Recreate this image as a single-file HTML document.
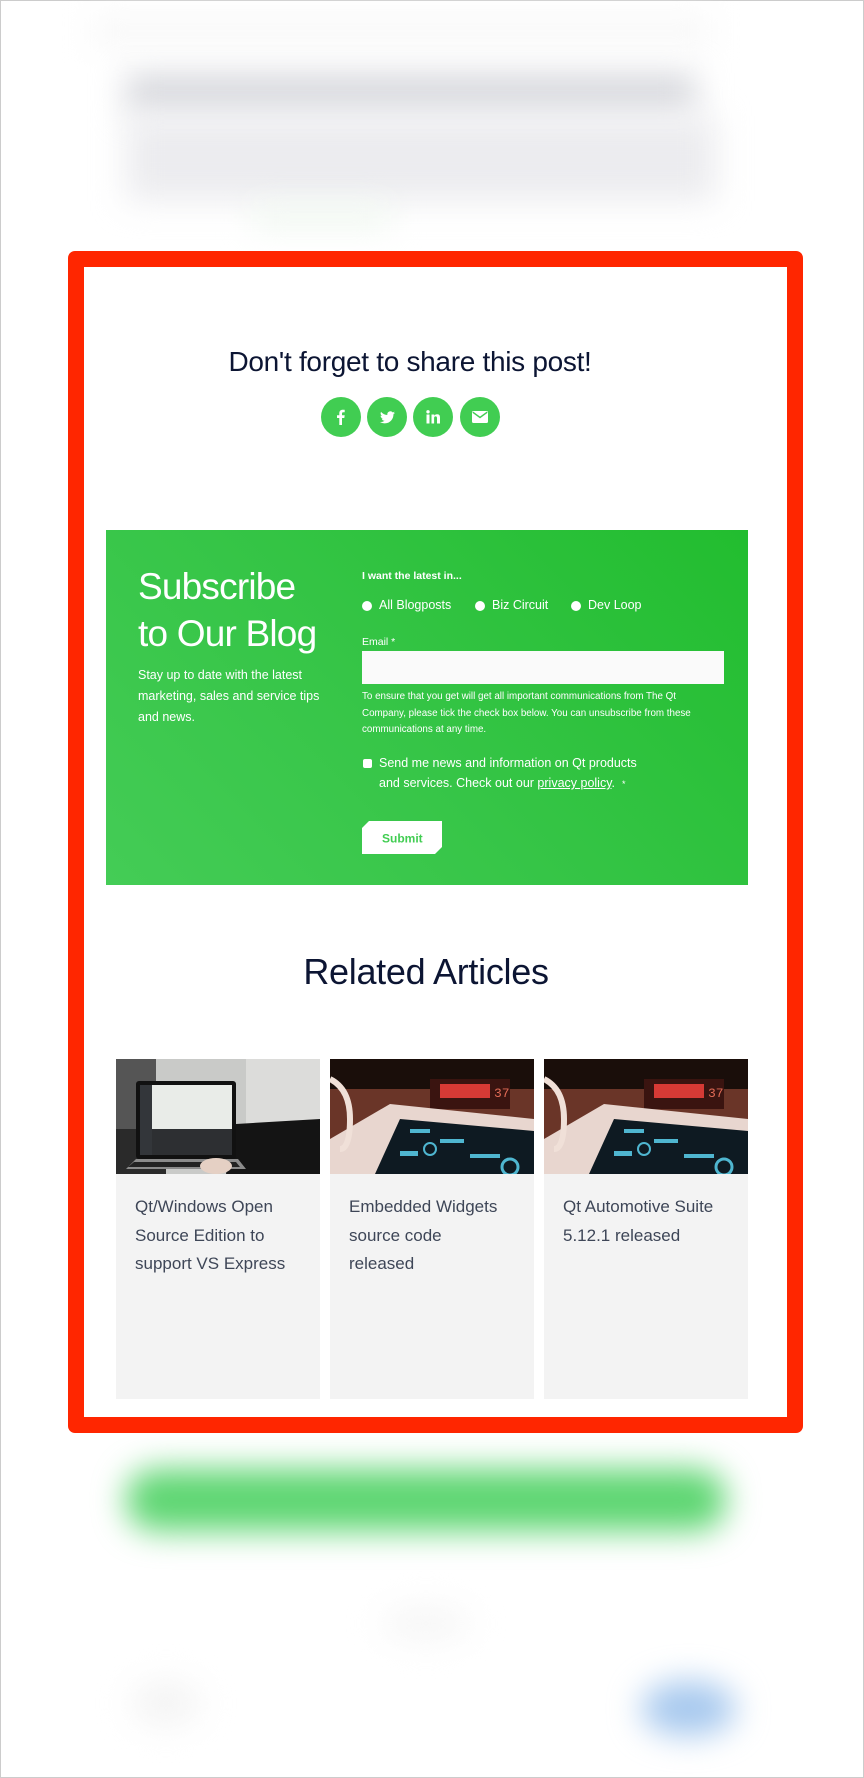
<!DOCTYPE html>
<html><head><meta charset="utf-8"><style>
*{margin:0;padding:0;box-sizing:border-box}
body{width:864px;height:1778px;position:relative;overflow:hidden;background:#fff;font-family:"Liberation Sans",sans-serif;border:1px solid #ccc}
.a{position:absolute}
.blur{position:absolute;filter:blur(16px)}
.frame{left:67px;top:250px;width:735px;height:1182px;border:16px solid #ff2600;border-radius:7px;background:#fff}
.circ{width:40px;height:40px;border-radius:50%;background:#41cd52;top:396px;display:flex;align-items:center;justify-content:center}
.green{left:105px;top:529px;width:642px;height:355px;background:linear-gradient(225deg,#22bd2f 0%,#36c547 55%,#44cc56 100%)}
.w{color:#fff}
.radio{width:10px;height:10px;border-radius:50%;background:#fff;top:600px}
.card{top:1058px;width:204px;height:340px;background:#f3f3f3}
.card .t{position:absolute;left:19px;top:134px;font-size:17px;line-height:28.5px;color:#3e4657;width:160px}
</style></head><body>
<div class="blur" style="left:125px;top:72px;width:570px;height:40px;background:#d8d9de"></div>
<div class="blur" style="left:125px;top:115px;width:590px;height:85px;background:#ececef"></div>
<div class="blur" style="left:250px;top:205px;width:140px;height:22px;background:#f0f8f0"></div>
<div class="blur" style="left:90px;top:15px;width:620px;height:30px;background:#f8f8f8"></div>

<div class="a frame"></div>
<div class="a" style="left:-23px;width:864px;top:345px;text-align:center;font-size:28px;color:#0c1533;letter-spacing:-0.3px">Don't forget to share this post!</div>
<div class="a circ" style="left:320px"><svg width="14" height="16" viewBox="0 0 14 16"><path d="M8 16V9h2.3l.4-2.7H8V4.6c0-.8.2-1.3 1.3-1.3h1.4V.9C10.4.8 9.6.8 8.7.8 6.7.8 5.3 2 5.3 4.3v2H3V9h2.3v7z" fill="#fff"/></svg></div>
<div class="a circ" style="left:366px"><svg width="15" height="13" viewBox="0 0 24 20"><path d="M24 2.4a10 10 0 0 1-2.8.8A4.9 4.9 0 0 0 23.3.5a9.8 9.8 0 0 1-3.1 1.2A4.9 4.9 0 0 0 11.8 6 14 14 0 0 1 1.7.9a4.9 4.9 0 0 0 1.5 6.6 4.9 4.9 0 0 1-2.2-.6 4.9 4.9 0 0 0 3.9 4.8 4.9 4.9 0 0 1-2.2.1 4.9 4.9 0 0 0 4.6 3.4A9.9 9.9 0 0 1 0 17.2 14 14 0 0 0 7.5 19.4c9.1 0 14-7.5 14-14v-.6A10 10 0 0 0 24 2.4z" fill="#fff"/></svg></div>
<div class="a circ" style="left:412px"><svg width="14" height="14" viewBox="0 0 14 14"><rect x="0.5" y="4.5" width="3" height="9" fill="#fff"/><circle cx="2" cy="1.8" r="1.7" fill="#fff"/><path d="M5.5 4.5h2.8v1.3c.5-.9 1.6-1.5 2.9-1.5 2.4 0 2.8 1.6 2.8 3.6v5.6h-3V8.6c0-1.1 0-2.2-1.4-2.2s-1.5 1-1.5 2.1v5H5.5z" fill="#fff"/></svg></div>
<div class="a circ" style="left:459px"><svg width="16" height="12" viewBox="0 0 16 12"><rect x="0" y="0" width="16" height="12" rx="1.5" fill="#fff"/><path d="M0.8 1.2 8 6.5l7.2-5.3" stroke="#41cd52" stroke-width="1.5" fill="none"/></svg></div>

<div class="a green"></div>
<div class="a w" style="left:137px;top:562px;font-size:37px;line-height:47px;letter-spacing:-0.8px">Subscribe<br>to Our Blog</div>
<div class="a w" style="left:137px;top:664px;font-size:12.5px;line-height:21px;width:200px">Stay up to date with the latest marketing, sales and service tips and news.</div>
<div class="a w" style="left:361px;top:569px;font-size:10.5px;font-weight:bold">I want the latest in...</div>
<div class="a radio" style="left:361px"></div><div class="a w" style="left:378px;top:597px;font-size:12.5px">All Blogposts</div>
<div class="a radio" style="left:474px"></div><div class="a w" style="left:491px;top:597px;font-size:12.5px">Biz Circuit</div>
<div class="a radio" style="left:570px"></div><div class="a w" style="left:587px;top:597px;font-size:12.5px">Dev Loop</div>
<div class="a w" style="left:361px;top:635px;font-size:10.5px">Email *</div>
<div class="a" style="left:361px;top:650px;width:362px;height:33px;background:#fafafa"></div>
<div class="a w" style="left:361px;top:688px;font-size:9.8px;line-height:16.7px;width:340px">To ensure that you get will get all important communications from The Qt Company, please tick the check box below. You can unsubscribe from these communications at any time.</div>
<div class="a" style="left:362px;top:758px;width:9px;height:9px;background:#fff;border-radius:2px"></div>
<div class="a w" style="left:378px;top:752px;font-size:12.5px;line-height:20px;width:265px">Send me news and information on Qt products and services. Check out our <u>privacy policy</u>. &nbsp;<span style="font-size:9px">*</span></div>
<svg class="a" style="left:361px;top:820px" width="80" height="33"><path d="M7 0H80V26L73 33H0V7Z" fill="#fff"/><text x="20" y="21.5" font-family="Liberation Sans" font-size="12" font-weight="bold" fill="#41cd52">Submit</text></svg>

<div class="a" style="left:-7px;width:864px;top:950px;text-align:center;font-size:36px;color:#0c1533;letter-spacing:-0.3px">Related Articles</div>

<div class="a card" style="left:115px"><svg width="204" height="115" viewBox="0 0 204 115"><rect width="204" height="115" fill="#c9cac8"/><rect x="0" y="0" width="40" height="115" fill="#555"/><rect x="130" y="0" width="74" height="115" fill="#dcdcda"/><rect x="0" y="70" width="50" height="45" fill="#2a2a2a"/><path d="M120 65 204 60V115H110Z" fill="#141414"/><rect x="20" y="22" width="100" height="78" rx="3" fill="#111"/><rect x="24" y="26" width="92" height="44" fill="#e9ece8"/><rect x="24" y="70" width="92" height="26" fill="#2d2f32"/><rect x="24" y="26" width="12" height="70" fill="#33363a"/><path d="M10 110 20 100H122L130 110Z" fill="#8b8b8b"/><path d="M18 103H120L124 108H12Z" fill="#222"/><ellipse cx="100" cy="107" rx="16" ry="8" fill="#e5d0c4"/></svg><div class="t">Qt/Windows Open Source Edition to support VS Express</div></div>

<div class="a card" style="left:329px"><svg width="204" height="115" viewBox="0 0 204 115"><rect width="204" height="115" fill="#1a0e0a"/><rect x="0" y="30" width="204" height="50" fill="#6a3528"/><rect x="100" y="20" width="80" height="30" fill="#3a1410"/><rect x="110" y="25" width="50" height="14" fill="#d63a35"/><text x="164" y="38" font-family="Liberation Mono" font-size="13" fill="#e06a55">37</text><path d="M0 115V80L60 45 204 60V115Z" fill="#e8d6cf"/><path d="M45 115 70 60 204 72V115Z" fill="#0e1a22"/><g fill="#4fb6d0"><rect x="80" y="70" width="20" height="4"/><rect x="110" y="80" width="24" height="4"/><rect x="70" y="92" width="18" height="5"/><rect x="140" y="95" width="30" height="4"/></g><circle cx="100" cy="90" r="6" stroke="#4fb6d0" fill="none" stroke-width="2"/><circle cx="180" cy="108" r="8" stroke="#4fb6d0" fill="none" stroke-width="3"/><path d="M0 20Q20 30 20 60T10 90" stroke="#f0e0d8" stroke-width="6" fill="none"/></svg><div class="t">Embedded Widgets source code released</div></div>

<div class="a card" style="left:543px"><svg width="204" height="115" viewBox="0 0 204 115"><rect width="204" height="115" fill="#1a0e0a"/><rect x="0" y="30" width="204" height="50" fill="#6a3528"/><rect x="100" y="20" width="80" height="30" fill="#3a1410"/><rect x="110" y="25" width="50" height="14" fill="#d63a35"/><text x="164" y="38" font-family="Liberation Mono" font-size="13" fill="#e06a55">37</text><path d="M0 115V80L60 45 204 60V115Z" fill="#e8d6cf"/><path d="M45 115 70 60 204 72V115Z" fill="#0e1a22"/><g fill="#4fb6d0"><rect x="80" y="70" width="20" height="4"/><rect x="110" y="80" width="24" height="4"/><rect x="70" y="92" width="18" height="5"/><rect x="140" y="95" width="30" height="4"/></g><circle cx="100" cy="90" r="6" stroke="#4fb6d0" fill="none" stroke-width="2"/><circle cx="180" cy="108" r="8" stroke="#4fb6d0" fill="none" stroke-width="3"/><path d="M0 20Q20 30 20 60T10 90" stroke="#f0e0d8" stroke-width="6" fill="none"/></svg><div class="t">Qt Automotive Suite 5.12.1 released</div></div>

<div class="blur" style="left:125px;top:1468px;width:600px;height:62px;background:#5ed672;border-radius:30px"></div>
<div class="blur" style="left:640px;top:1680px;width:95px;height:55px;background:#a6c8ee;border-radius:50%"></div>
<div class="blur" style="left:130px;top:1680px;width:70px;height:45px;background:#f4f4f4;border-radius:50%"></div>
<div class="blur" style="left:380px;top:1605px;width:90px;height:35px;background:#f6f6f6;border-radius:50%"></div>
</body></html>
